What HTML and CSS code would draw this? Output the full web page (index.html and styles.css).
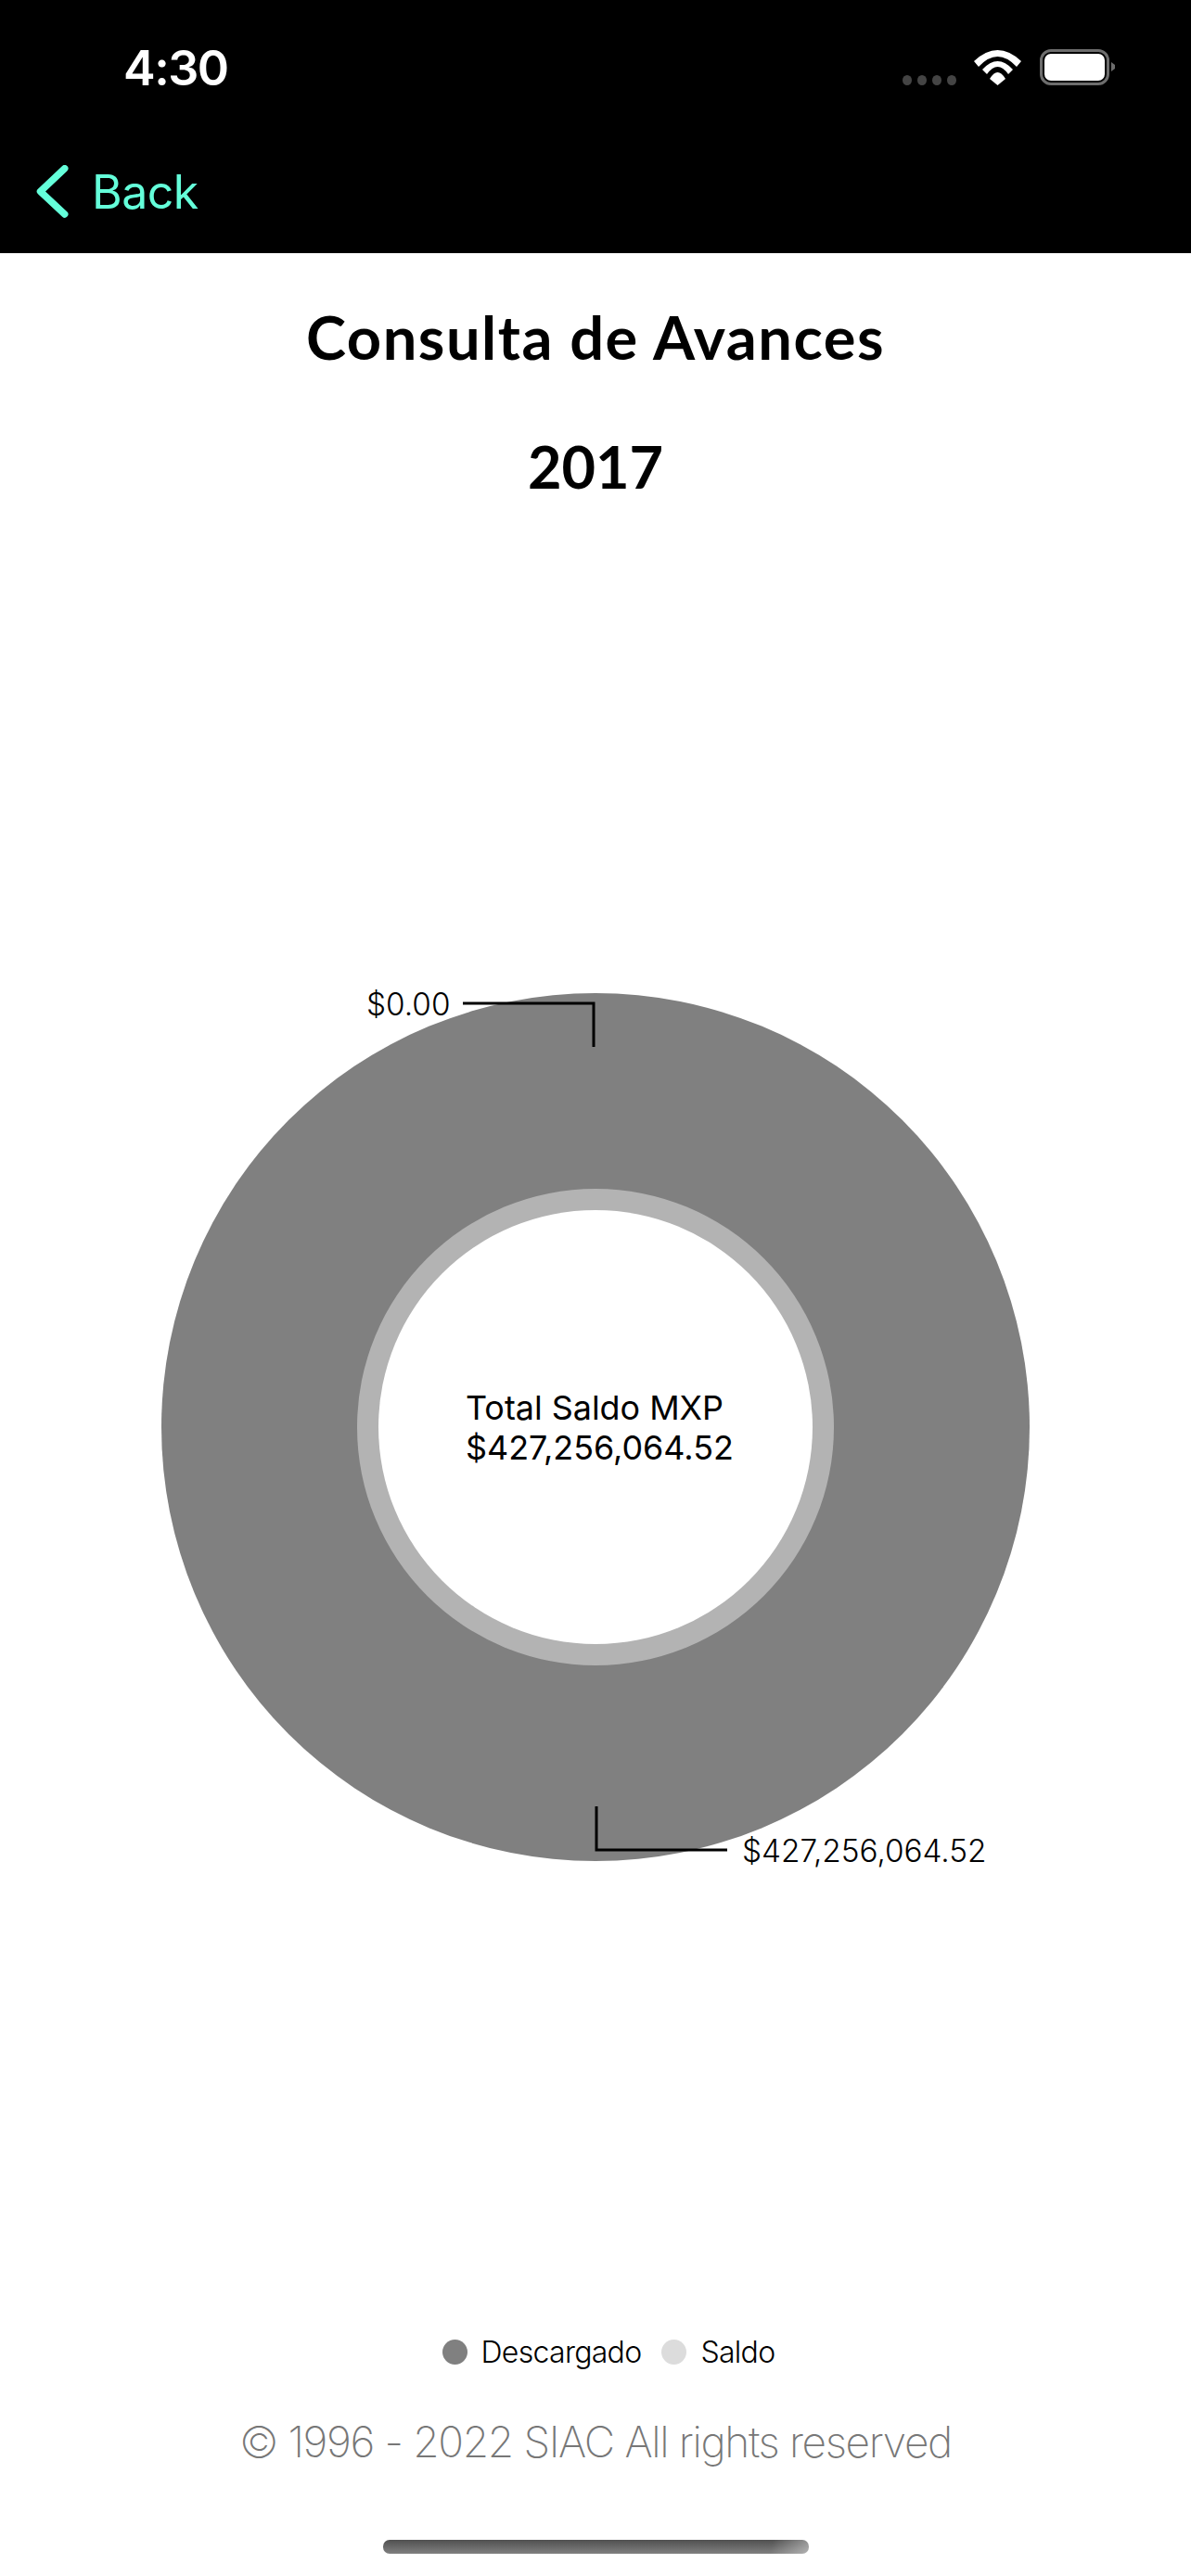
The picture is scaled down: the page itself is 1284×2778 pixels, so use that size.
FILE: index.html
```html
<!DOCTYPE html>
<html lang="es">
<head>
  <meta charset="UTF-8" />
  <title>Consulta de Avances</title>
  <meta name="viewport" content="width=device-width, initial-scale=1.0" />
  <link rel="stylesheet" href="styles.css">
</head>
<body>
  <!-- Barra superior -->
  <header class="top">
    <div class="status">
      <span class="time">4:30</span>
      <div class="status-icons">
        <div class="signal"><i></i><i></i><i></i><i></i></div>
        <svg class="wifi" width="51" height="38" viewBox="0 0 51 38">
          <path d="M17 31 Q25.500 17 34 31 L25.500 38 Z" fill="#fff"/>
          <path d="M9 21 Q25.500 3 42 21 L37 26 Q25.500 10 14 26 Z" fill="#fff"/>
          <path d="M0 12 Q25.500 -12 51 12 L46 18 Q25.500 -4 5 18 Z" fill="#fff"/>
        </svg>
        <div class="battery"><div class="battery-fill"></div></div>
        <svg class="battery-cap" width="4" height="10" viewBox="0 0 4 10"><path d="M0 0 L4 3 V7 L0 10 Z" fill="#6d6d6d"/></svg>
      </div>
    </div>
    <a class="back">
      <svg width="40" height="58" viewBox="0 0 40 58"><path d="M33.700 3.700 L7.500 28.500 L33.700 53" fill="none" stroke="#64ffda" stroke-width="7.500" stroke-linecap="round" stroke-linejoin="round"/></svg>
      <span>Back</span>
    </a>
  </header>

  <main class="page">
    <h1>Consulta de Avances</h1>
    <h2>2017</h2>

    <!-- Dona -->
    <svg class="chart" width="1284" height="1100" viewBox="0 0 1284 1100">
      <circle cx="642" cy="532" r="468" fill="#808080"/>
      <circle cx="642" cy="532" r="257" fill="#b3b3b3"/>
      <circle cx="642" cy="532" r="234" fill="#fff"/>
      <path class="leader" d="M499 75 H640 V122"/>
      <path class="leader" d="M643 941 V988 H784"/>
      <text class="label" x="395" y="88">$0.00</text>
      <text class="label" x="800" y="1001">$427,256,064.52</text>
      <text class="center" x="502" y="524">Total Saldo MXP</text>
      <text class="center" x="502" y="567">$427,256,064.52</text>
    </svg>

    <div class="legend">
      <span class="dot dark"></span><span class="legend-text">Descargado</span>
      <span class="dot light"></span><span class="legend-text">Saldo</span>
    </div>
    <p class="copy">© 1996 - 2022 SIAC All rights reserved</p>
    <div class="home-bar"></div>
  </main>
</body>
</html>
```

FILE: styles.css
```css
* { box-sizing: border-box; margin: 0; padding: 0; }
html, body { width: 100%; height: 100%; background: #fff; color: #000; font-family: 'Inter', sans-serif; }

/* Barra superior */
.top { background: #000; height: 273px; padding-top: 53px; }
.status { display: flex; justify-content: space-between; height: 39px; padding: 0 82px 0 133px; }
.time { color: #fff; font-size: 52px; font-weight: 600; line-height: 42px; letter-spacing: -1.500px; }
.status-icons { display: flex; align-items: flex-end; }
.signal { display: flex; gap: 5.500px; margin-right: 19px; }
.signal i { width: 10.500px; height: 11px; border-radius: 50%; background: #444; }
.wifi { margin-right: 20px; }
.battery { width: 75px; height: 39px; border: 3px solid #6d6d6d; border-radius: 12px; padding: 2px; }
.battery-fill { width: 100%; height: 100%; background: #fff; border-radius: 7px; }
.battery-cap { margin: 0 0 15px 2px; }
.back { display: flex; align-items: center; gap: 23px; margin: 86px 0 0 36px; color: #64ffda; font-size: 50px; line-height: 58px; letter-spacing: -0.500px; }

/* Contenido */
.page { display: flex; flex-direction: column; align-items: center; }
h1, h2 { font-family: 'Lato', sans-serif; font-weight: 700; line-height: 64px; }
h1 { margin-top: 58px; font-size: 65px; letter-spacing: 1.500px; }
h2 { margin-top: 76px; font-size: 63px; }
.chart { display: block; margin-top: 472px; }
.leader { fill: none; stroke: #000; stroke-width: 3; }
.label { font-family: 'Inter', sans-serif; font-size: 33.300px; font-weight: 300; }
.center { font-family: 'Inter', sans-serif; font-size: 35.900px; font-weight: 400; }

.legend { display: flex; align-items: center; margin-top: 413px; padding-left: 28px; height: 32px; }
.dot { width: 27px; height: 27px; border-radius: 50%; }
.dot.dark { background: #808080; }
.dot.light { background: #dcdcdc; margin-left: 22px; }
.legend-text { margin-left: 15px; font-size: 32px; font-weight: 300; letter-spacing: -0.700px; }
.copy { margin-top: 53px; color: #777; font-size: 46px; font-weight: 200; line-height: 56px; letter-spacing: -1.350px; }
.home-bar { width: 459px; height: 15px; margin-top: 78px; border-radius: 7px; background: linear-gradient(100deg, transparent 91%, rgba(255,255,255,0.4) 100%), linear-gradient(180deg, #505050, #808080); }
```
